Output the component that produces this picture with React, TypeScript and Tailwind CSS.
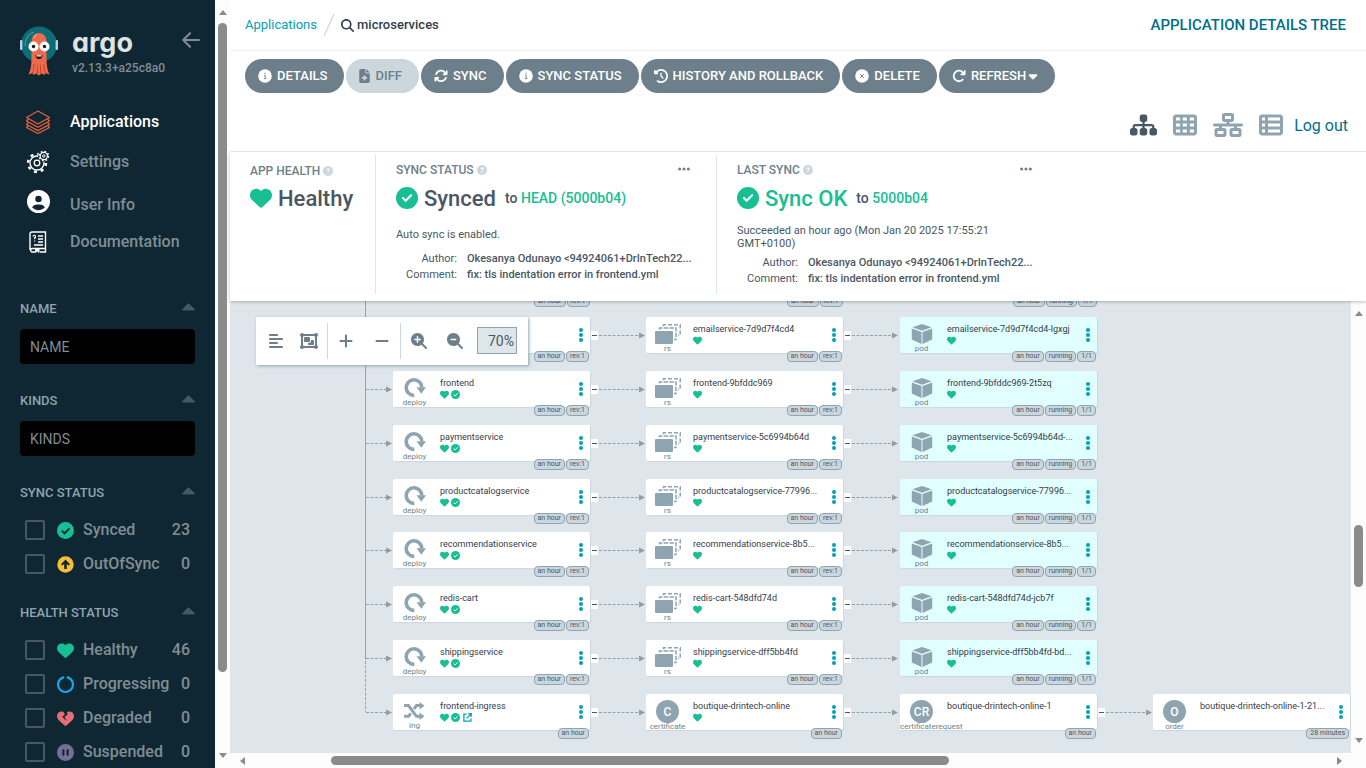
import React from 'react';
import {
  FaAlignLeft,
  FaArrowRotateRight,
  FaArrowsRotate,
  FaCaretDown,
  FaCircleCheck,
  FaCircleNotch,
  FaCirclePause,
  FaCircleQuestion,
  FaCircleUser,
  FaClockRotateLeft,
  FaEllipsis,
  FaFileMedical,
  FaHeart,
  FaHeartCrack,
  FaMagnifyingGlass,
  FaMagnifyingGlassMinus,
  FaMagnifyingGlassPlus,
  FaMinus,
  FaNetworkWired,
  FaObjectGroup,
  FaPlus,
  FaSitemap,
  FaTableCells,
  FaTableList,
} from 'react-icons/fa6';

/* ---------- drawings ---------- */

function ArgoMascot() {
  return (
    <svg viewBox="0 0 38 50" className="h-[50px] w-[38px]" aria-hidden="true">
      <circle cx="19" cy="18.5" r="18" fill="#0e6b78" />
      <path d="M5 20a14 14 0 0 1 9-14" fill="none" stroke="#4d97a1" strokeWidth="1.2" />
      <rect x="0" y="14" width="2.4" height="10" rx="1" fill="#b4d4e4" />
      <rect x="35.6" y="14" width="2.4" height="10" rx="1" fill="#b4d4e4" />
      <path d="M11.5 15a7.5 8 0 0 1 15 0v17c0 6 .5 12 3 16.500l-4-1.500-1 2-2.500-1.500-3 2-3-2-2.500 1.500-1-2-4 1.500c2.500-4.500 3-10.500 3-16.500z" fill="#ee6a4b" />
      <path d="M14 38c0 4-.5 7-2 10M17.500 39v9M20.500 39v9M24 38c0 4 .5 7 2 10" fill="none" stroke="#b9442e" strokeWidth=".9" />
      <path d="M14 12c.5-2 1.500-3 3-3.500" fill="none" stroke="#f7a28b" strokeWidth="1.200" />
      <circle cx="13.500" cy="20.500" r="5" fill="#fff" />
      <circle cx="24.500" cy="20.500" r="5" fill="#fff" />
      <circle cx="13.500" cy="20.500" r="1.700" fill="#1a1a1a" />
      <circle cx="24.500" cy="20.500" r="1.700" fill="#1a1a1a" />
      <path d="M15.500 29h7a3.500 4 0 0 1-7 0z" fill="#2a1210" />
      <path d="M16.500 29.200h5v1.300h-5z" fill="#fff" />
    </svg>
  );
}

function StackIcon() {
  return (
    <svg viewBox="0 0 24 24" className="size-6" fill="none" stroke="#e9603c" strokeWidth="1.200" strokeLinejoin="round" aria-hidden="true">
      <path d="M12 1 23.500 7.500 12 14 .5 7.500z" />
      <path d="M2.500 9 .5 11 12 17.300 23.500 11l-2-2" />
      <path d="M2.500 12.500.5 14.500 12 20.600l11.500-6.100-2-2" />
      <path d="M2.500 15.500.5 17.500 12 23.500l11.500-6-2-2" />
    </svg>
  );
}

function GearsIcon() {
  return (
    <svg viewBox="0 0 24 24" className="size-6" fill="none" stroke="#fff" aria-hidden="true">
      <circle cx="11" cy="13" r="7" strokeWidth="1.300" />
      <circle cx="11" cy="13" r="8.900" strokeWidth="2.600" strokeDasharray="3 3.990" />
      <circle cx="11" cy="13" r="2.800" strokeWidth="1.300" />
      <circle cx="17.800" cy="6" r="5" fill="#0f2733" stroke="#0f2733" strokeWidth="1.500" />
      <circle cx="17.800" cy="6" r="3.600" strokeWidth="1.200" />
      <circle cx="17.800" cy="6" r="4.700" strokeWidth="1.400" strokeDasharray="1.800 1.890" />
      <circle cx="17.800" cy="6" r="1.200" strokeWidth="1" />
    </svg>
  );
}

function BookIcon() {
  return (
    <svg viewBox="0 0 18 22" className="h-[22px] w-[18px]" fill="none" stroke="#fff" strokeWidth="1.400" aria-hidden="true">
      <path d="M1 19V3a2 2 0 0 1 2-2h13.500v16.500H3a1.800 1.800 0 0 0 0 3.500h3M11 21h5.500v-3.500" />
      <path d="M4 5.500a1.300 1.300 0 1 1 1.600 1.300v1.400M5.600 9.500v1" strokeWidth="1.200" />
      <path d="M9 5h5M9 8h5M9 11h5M5 14h9" strokeWidth="1.300" />
      <path d="M6.500 18v3.500l1.800-1.200 1.800 1.200V18" fill="#fff" strokeWidth=".8" />
    </svg>
  );
}

function BackArrow() {
  return (
    <svg viewBox="0 0 18 16" className="h-4 w-[18px]" fill="none" stroke="#818d94" strokeWidth="2" strokeLinecap="round" strokeLinejoin="round" aria-hidden="true">
      <path d="M8 1.200 1.200 8 8 14.800M1.500 8H17" />
    </svg>
  );
}

function InfoDisc() {
  return (
    <svg viewBox="0 0 14 14" className="size-3.5" aria-hidden="true">
      <circle cx="7" cy="7" r="6.800" fill="#fff" />
      <path d="M6.300 4.300h1.400M6 6.300h1.200v3M5.800 9.600h2.600" fill="none" stroke="#6d7f8b" strokeWidth=".9" />
    </svg>
  );
}

function CrossDisc() {
  return (
    <svg viewBox="0 0 14 14" className="size-3.5" aria-hidden="true">
      <circle cx="7" cy="7" r="6.800" fill="#fff" />
      <path d="m5.200 5.200 3.600 3.600M8.800 5.200 5.200 8.800" stroke="#6d7f8b" strokeWidth="1" />
    </svg>
  );
}

function UpDisc() {
  return (
    <svg viewBox="0 0 17 17" className="size-[17px]" aria-hidden="true">
      <circle cx="8.500" cy="8.500" r="8.200" fill="#f4c030" />
      <path d="M8.500 3.500 13 8.300l-1.300 1.300-1.900-1.700v5H7.200v-5L5.300 9.600 4 8.300z" fill="#0f2733" />
    </svg>
  );
}

function DeployIcon() {
  return (
    <svg viewBox="0 0 22 20" className="h-5 w-[22px]" aria-hidden="true">
      <path d="M10.300 17.400A7.800 7.800 0 1 1 17.800 9.500" fill="none" stroke="#8fa4b1" strokeWidth="3.600" />
      <path d="M12.500 9.300H22l-4.700 6.500z" fill="#8fa4b1" />
    </svg>
  );
}

function ReplicaIcon() {
  return (
    <svg viewBox="0 0 26 20" className="h-5 w-[26px]" aria-hidden="true">
      <rect x="0" y="7" width="18" height="13" rx="1" fill="#8fa4b1" />
      <path d="M4.500 5.500V4H21v11.500h-2" fill="none" stroke="#8fa4b1" strokeWidth="1.500" strokeDasharray="4.500 1.200" />
      <path d="M8.500 2.300V.8h16.700v10.700h-2" fill="none" stroke="#8fa4b1" strokeWidth="1.500" strokeDasharray="4 2" />
    </svg>
  );
}

function PodIcon() {
  return (
    <svg viewBox="0 0 22 20" className="h-5 w-[22px]" fill="#8fa4b1" aria-hidden="true">
      <path d="M11 0 20.500 3.300 11 6.800 1.500 3.300z" />
      <path d="M.8 4.500 10.500 8v12L.8 15.500z" />
      <path d="M21.200 4.500 11.500 8v12l9.700-4.500z" />
    </svg>
  );
}

function IngressIcon() {
  return (
    <svg viewBox="0 0 21 18" className="h-[18px] w-[21px]" fill="none" stroke="#8fa4b1" strokeWidth="3" aria-hidden="true">
      <path d="M0 3.500h4.500l8 10.800H16M0 14.300h4.500l2.300-3M10 6.800l2.500-3.300H16" />
      <path d="M15.500 0 20.500 3.700 15.500 7.500zM15.500 10.500l5 3.800-5 3.700z" fill="#8fa4b1" stroke="none" />
    </svg>
  );
}

function ExternalIcon() {
  return (
    <svg viewBox="0 0 10 10" className="size-[9px]" fill="none" stroke="#00a2b3" strokeWidth="1.400" aria-hidden="true">
      <path d="M4 1.200H1V9h7.800V6M5.800.8h3.400v3.400M9 1 4 6" />
    </svg>
  );
}

function CheckDisc({ className, mark }: { className: string; mark: string }) {
  return (
    <svg viewBox="0 0 16 16" className={className} aria-hidden="true">
      <circle cx="8" cy="8" r="8" fill="#18be94" />
      <path d="m4.500 8.200 2.600 2.500 4.600-4.800" fill="none" stroke={mark} strokeWidth="1.700" />
    </svg>
  );
}

/* ---------- scrollbars ---------- */

function VScroll({ before, thumb, after }: { before: number; thumb: number; after: number }) {
  return (
    <div className="flex w-[15px] shrink-0 flex-col items-center bg-[#fcfcfc] py-2.5" aria-hidden="true">
      <span className="h-0 w-0 border-x-4 border-b-[5px] border-x-transparent border-b-[#8b8b8b]" />
      <span style={{ flexGrow: before }} />
      <span className="w-[9px] rounded-full bg-[#8b8b8b]" style={{ flexGrow: thumb }} />
      <span style={{ flexGrow: after }} />
      <span className="h-0 w-0 border-x-4 border-t-[5px] border-x-transparent border-t-[#8b8b8b]" />
    </div>
  );
}

function HScroll({ before, thumb, after }: { before: number; thumb: number; after: number }) {
  return (
    <div className="flex h-[15px] shrink-0 items-center bg-[#fcfcfc] pr-6 pl-2.5" aria-hidden="true">
      <span className="h-0 w-0 border-y-4 border-r-[5px] border-y-transparent border-r-[#8b8b8b]" />
      <span style={{ flexGrow: before }} />
      <span className="h-[9px] rounded-full bg-[#8b8b8b]" style={{ flexGrow: thumb }} />
      <span style={{ flexGrow: after }} />
      <span className="h-0 w-0 border-y-4 border-l-[5px] border-y-transparent border-l-[#8b8b8b]" />
    </div>
  );
}

/* ---------- sidebar ---------- */

function FilterTitle({ children }: { children: string }) {
  return (
    <button type="button" className="flex h-4 w-full items-center justify-between text-[13px] font-medium text-[#8fa4b1]">
      {children}
      <svg viewBox="0 0 13 8" className="mb-1 h-2 w-[13px]" aria-hidden="true">
        <path d="M1 7.600h11c.8 0 1.200-.9.600-1.400L7.300.8a1.200 1.200 0 0 0-1.600 0L.4 6.200c-.6.500-.2 1.400.6 1.400z" fill="#495763" />
      </svg>
    </button>
  );
}

function FilterRow({ icon, label, count }: { icon: React.ReactNode; label: string; count: number }) {
  return (
    <label className="flex h-[34px] items-center pr-[5px] pl-[5px] text-base font-medium text-[#818d94]">
      <input type="checkbox" className="size-5 shrink-0 appearance-none rounded-xs border-2 border-[#495763]" />
      <span className="ml-3 flex w-[17px] shrink-0 justify-center text-[17px]">{icon}</span>
      <span className="ml-[9px] flex-1">{label}</span>
      <span>{count}</span>
    </label>
  );
}

function Sidebar() {
  return (
    <aside className="w-[215px] shrink-0 overflow-hidden bg-[#0f2733]">
      <div className="flex h-[102px] items-start pt-[26px] pl-5">
        <ArgoMascot />
        <div className="ml-3.5 flex-1">
          <div className="h-[34px] font-['Inter',sans-serif] text-[27px] leading-[34px] font-bold text-[#dfe3e2] [font-feature-settings:'cv11']">argo</div>
          <div className="text-xs leading-4 font-medium text-[#818d94]">v2.13.3+a25c8a0</div>
        </div>
        <button type="button" aria-label="Collapse sidebar" className="mt-1.5 mr-[15px]">
          <BackArrow />
        </button>
      </div>
      <nav className="text-base font-medium text-[#818d94]">
        <a href="#applications" className="flex h-10 items-center text-white">
          <span className="ml-[25px] flex w-[26px] justify-center"><StackIcon /></span>
          <span className="ml-[19px]">Applications</span>
        </a>
        <a href="#settings" className="flex h-10 items-center">
          <span className="ml-[25px] flex w-[26px] justify-center"><GearsIcon /></span>
          <span className="ml-[19px]">Settings</span>
        </a>
        <a href="#user" className="flex h-[45px] items-center">
          <span className="mb-1.5 ml-[25px] flex w-[26px] justify-center text-[23px] text-white"><FaCircleUser /></span>
          <span className="ml-[19px]">User Info</span>
        </a>
        <a href="#docs" className="flex h-[30px] items-center">
          <span className="ml-[25px] flex w-[26px] justify-center"><BookIcon /></span>
          <span className="ml-[19px]">Documentation</span>
        </a>
      </nav>
      <div className="mt-11 px-5">
        <FilterTitle>NAME</FilterTitle>
        <input type="text" aria-label="Name" placeholder="NAME" className="mt-3 mb-[29px] h-[35px] w-full rounded bg-black px-2.5 text-sm placeholder:text-[#818d94]" />
        <FilterTitle>KINDS</FilterTitle>
        <input type="text" aria-label="Kinds" placeholder="KINDS" className="mt-3 mb-[29px] h-[35px] w-full rounded bg-black px-2.5 text-sm placeholder:text-[#818d94]" />
        <FilterTitle>SYNC STATUS</FilterTitle>
        <div className="mt-3 mb-6">
          <FilterRow icon={<CheckDisc className="size-[17px]" mark="#0f2733" />} label="Synced" count={23} />
          <FilterRow icon={<UpDisc />} label="OutOfSync" count={0} />
        </div>
        <FilterTitle>HEALTH STATUS</FilterTitle>
        <div className="mt-3">
          <FilterRow icon={<FaHeart color="#18be94" />} label="Healthy" count={46} />
          <FilterRow icon={<FaCircleNotch color="#0dadea" />} label="Progressing" count={0} />
          <FilterRow icon={<FaHeartCrack color="#e96d76" />} label="Degraded" count={0} />
          <FilterRow icon={<FaCirclePause color="#766f94" />} label="Suspended" count={0} />
        </div>
      </div>
    </aside>
  );
}

/* ---------- header ---------- */

function ActionButton({ icon, children, disabled }: { icon: React.ReactNode; children: React.ReactNode; disabled?: boolean }) {
  const tone = disabled ? 'bg-[#ccd6dd] text-[#6d7f8b]' : 'bg-[#6d7f8b] text-white';
  return (
    <button type="button" disabled={disabled} className={`flex h-[34px] items-center rounded-full pr-[17px] pl-[13px] text-[13px] font-medium ${tone}`}>
      <span className="mr-[5px] flex text-sm">{icon}</span>
      {children}
    </button>
  );
}

function Header() {
  return (
    <header>
      <div className="flex h-[51px] items-center border-b border-[#eef0f1] pr-5 pl-[15px] text-[13px]">
        <a href="#applications" className="text-[#00a2b3]">Applications</a>
        <svg viewBox="0 0 12 22" className="mx-1.5 h-[22px] w-3" aria-hidden="true">
          <path d="M1 22 11 0" stroke="#ccd6dd" strokeWidth="1.200" />
        </svg>
        <span className="flex items-center gap-[3px] font-medium text-[#363c4a]">
          <FaMagnifyingGlass className="text-[13px]" />
          microservices
        </span>
        <h1 className="ml-auto text-[15px] font-medium text-[#006f8a]">APPLICATION DETAILS TREE</h1>
      </div>
      <div className="flex gap-0.5 pt-2 pl-[15px]">
        <ActionButton icon={<InfoDisc />}>DETAILS</ActionButton>
        <ActionButton icon={<FaFileMedical className="h-3.5 w-[11px]" />} disabled>DIFF</ActionButton>
        <ActionButton icon={<FaArrowsRotate />}>SYNC</ActionButton>
        <ActionButton icon={<InfoDisc />}>SYNC STATUS</ActionButton>
        <ActionButton icon={<FaClockRotateLeft />}>HISTORY AND ROLLBACK</ActionButton>
        <ActionButton icon={<CrossDisc />}>DELETE</ActionButton>
        <ActionButton icon={<FaArrowRotateRight />}>
          REFRESH
          <FaCaretDown className="ml-0.5 h-3.5 w-2.5" />
        </ActionButton>
      </div>
      <div className="flex h-[59px] items-center justify-end border-b border-[#eef0f1] pt-1.5 pr-[18px] text-[#8fa4b1]">
        <button type="button" aria-label="Tree view" className="mr-4 text-[#495763]"><FaSitemap className="h-6 w-[27px]" /></button>
        <button type="button" aria-label="Pods view" className="mr-4"><FaTableCells className="size-6" /></button>
        <button type="button" aria-label="Network view" className="mr-4"><FaNetworkWired className="h-6 w-[30px]" /></button>
        <button type="button" aria-label="List view" className="mr-[11px]"><FaTableList className="size-6" /></button>
        <a href="#logout" className="pt-0.5 text-base text-[#006f8a]">Log out</a>
      </div>
    </header>
  );
}

/* ---------- status panel ---------- */

function PanelTitle({ children, menu }: { children: string; menu?: boolean }) {
  return (
    <div className="flex h-4 items-center text-xs font-medium text-[#6d7f8b]">
      {children}
      <FaCircleQuestion className="ml-[3px] text-[10px] text-[#ccd6dd]" />
      {menu && (
        <button type="button" aria-label="More" className="mb-0.5 ml-auto text-sm"><FaEllipsis /></button>
      )}
    </div>
  );
}

function CommitInfo() {
  return (
    <dl className="grid grid-cols-[61px_230px] gap-x-2.5 text-[11px] leading-4 text-[#495763]">
      <dt className="text-right">Author:</dt>
      <dd className="truncate font-medium">Okesanya Odunayo &lt;94924061+DrInTech22...</dd>
      <dt className="text-right">Comment:</dt>
      <dd className="truncate font-medium">fix: tls indentation error in frontend.yml</dd>
    </dl>
  );
}

function StatusPanel() {
  return (
    <section className="relative z-20 flex h-[149px] bg-white pt-[3px] pb-[7px] shadow-[0_1px_3px_rgba(0,0,0,0.25)]">
      <div className="min-w-[146px] border-r border-[#dee6eb] pt-2 pl-5">
        <PanelTitle>APP HEALTH</PanelTitle>
        <div className="mt-[3px] flex h-8 items-center text-[22px] font-medium text-[#495763]">
          <FaHeart className="mr-1.5 text-[22px] text-[#18be94]" />
          Healthy
        </div>
      </div>
      <div className="w-[341px] border-r border-[#dee6eb] pt-[7px] pr-[25px] pl-5">
        <PanelTitle menu>SYNC STATUS</PanelTitle>
        <div className="mt-1 flex h-8 items-center text-[22px] font-medium text-[#495763]">
          <FaCircleCheck className="mr-1.5 text-[22px] text-[#18be94]" />
          Synced
          <span className="ml-[9px] text-sm">to <a href="#head" className="text-[#18be94]">HEAD (5000b04)</a></span>
        </div>
        <p className="mt-[13px] mb-2 text-[11px] leading-4 text-[#495763]">Auto sync is enabled.</p>
        <CommitInfo />
      </div>
      <div className="w-[341px] pt-[7px] pr-[25px] pl-5">
        <PanelTitle menu>LAST SYNC</PanelTitle>
        <div className="mt-1 flex h-8 items-center text-[22px] font-medium text-[#18be94]">
          <FaCircleCheck className="mr-1.5 text-[22px]" />
          Sync OK
          <span className="ml-[9px] text-sm text-[#495763]">to <a href="#rev" className="text-[#18be94]">5000b04</a></span>
        </div>
        <p className="mt-2.5 mb-[5px] text-[11px] leading-[13px] text-[#495763]">Succeeded an hour ago (Mon Jan 20 2025 17:55:21 GMT+0100)</p>
        <CommitInfo />
      </div>
    </section>
  );
}

/* ---------- resource tree ---------- */

type Kind = 'deploy' | 'rs' | 'pod' | 'ing' | 'certificate' | 'certificaterequest' | 'order';

interface TreeNode {
  kind: Kind;
  name: string;
  x: number;
  y: number;
  healthy?: boolean;
  synced?: boolean;
  link?: boolean;
  tags: string[];
  child?: boolean;
}

const COLUMNS = [163, 416, 670, 923];
const ROWS = [16, 70, 124, 178, 231, 285, 339, 393];

const services: [string, string, string][] = [
  ['emailservice', 'emailservice-7d9d7f4cd4', 'emailservice-7d9d7f4cd4-lgxgj'],
  ['frontend', 'frontend-9bfddc969', 'frontend-9bfddc969-2t5zq'],
  ['paymentservice', 'paymentservice-5c6994b64d', 'paymentservice-5c6994b64d-...'],
  ['productcatalogservice', 'productcatalogservice-77996...', 'productcatalogservice-77996...'],
  ['recommendationservice', 'recommendationservice-8b5...', 'recommendationservice-8b5...'],
  ['redis-cart', 'redis-cart-548dfd74d', 'redis-cart-548dfd74d-jcb7f'],
  ['shippingservice', 'shippingservice-dff5bb4fd', 'shippingservice-dff5bb4fd-bd...'],
];

const nodes: TreeNode[] = [
  ...services.flatMap(([deploy, rs, pod], i): TreeNode[] => [
    { kind: 'deploy', name: deploy, x: COLUMNS[0], y: ROWS[i], healthy: true, synced: true, tags: ['an hour', 'rev:1'], child: true },
    { kind: 'rs', name: rs, x: COLUMNS[1], y: ROWS[i], healthy: true, tags: ['an hour', 'rev:1'], child: true },
    { kind: 'pod', name: pod, x: COLUMNS[2], y: ROWS[i], healthy: true, tags: ['an hour', 'running', '1/1'] },
  ]),
  { kind: 'ing', name: 'frontend-ingress', x: COLUMNS[0], y: ROWS[7], healthy: true, synced: true, link: true, tags: ['an hour'], child: true },
  { kind: 'certificate', name: 'boutique-drintech-online', x: COLUMNS[1], y: ROWS[7], healthy: true, tags: ['an hour'], child: true },
  { kind: 'certificaterequest', name: 'boutique-drintech-online-1', x: COLUMNS[2], y: ROWS[7], tags: ['an hour'], child: true },
  { kind: 'order', name: 'boutique-drintech-online-1-21...', x: COLUMNS[3], y: ROWS[7], tags: ['28 minutes'] },
];

function KindIcon({ kind }: { kind: Kind }) {
  if (kind === 'deploy') return <DeployIcon />;
  if (kind === 'rs') return <ReplicaIcon />;
  if (kind === 'pod') return <PodIcon />;
  if (kind === 'ing') return <IngressIcon />;
  const initials = kind === 'certificate' ? 'C' : kind === 'order' ? 'O' : 'CR';
  return (
    <span className="flex size-[23px] shrink-0 items-center justify-center rounded-full bg-[#8fa4b1] text-xs font-medium text-white">{initials}</span>
  );
}

function Tags({ tags }: { tags: string[] }) {
  return (
    <div className="flex gap-px">
      {tags.map((tag) => (
        <span key={tag} className="flex h-[11px] items-center rounded border border-[#8fa4b1] bg-[#ccd6dd] px-[3px] text-[7px] leading-[9px] whitespace-nowrap text-[#495763]">{tag}</span>
      ))}
    </div>
  );
}

function NodeCard({ node }: { node: TreeNode }) {
  const tone = node.kind === 'pod' ? 'bg-[#e0fffe]' : 'bg-white';
  return (
    <div className="absolute" style={{ left: node.x, top: node.y }}>
      <div className={`relative flex h-9 w-[197px] rounded-xs shadow-[1px_1px_1px_#ccd6dd] ${tone}`}>
        <div className="flex w-[43px] shrink-0 flex-col [align-items:safe_center]">
          <span className="flex h-[30px] w-[43px] items-center justify-center pt-1.5"><KindIcon kind={node.kind} /></span>
          <span className="text-[8px] leading-[8px] whitespace-nowrap text-[#6d7f8b]">{node.kind}</span>
        </div>
        <div className="min-w-0 flex-1 pt-1.5 pl-1">
          <div className="text-[9px] leading-3 whitespace-nowrap text-[#363c4a]">{node.name}</div>
          <div className="mt-px flex h-[9px] items-center gap-0.5 text-[9px] text-[#18be94]">
            {node.healthy && <FaHeart />}
            {node.synced && <CheckDisc className="size-[9px]" mark="#fff" />}
            {node.link && <a href="#open" aria-label="Open" className="ml-px"><ExternalIcon /></a>}
          </div>
        </div>
        <button type="button" aria-label="Actions" className="flex w-4 flex-col items-center justify-center gap-px pr-0.5">
          <span className="size-1 rounded-full bg-[#00a2b3]" />
          <span className="size-1 rounded-full bg-[#00a2b3]" />
          <span className="size-1 rounded-full bg-[#00a2b3]" />
        </button>
        <div className="absolute right-px -bottom-[9px]"><Tags tags={node.tags} /></div>
        {node.child && (
          <button type="button" aria-label="Collapse children" className="absolute top-[14px] left-[198px] flex h-[9px] w-[7px] items-center justify-center bg-white">
            <span className="h-px w-[5px] bg-[#495763]" />
          </button>
        )}
      </div>
    </div>
  );
}

function Edges() {
  const arrow = (x: number, y: number) => `M${x - 6} ${y - 2.5}v6l6-3z`;
  return (
    <svg className="absolute top-0 left-0 h-full w-full" aria-hidden="true">
      <g fill="none" stroke="#8fa4b1" strokeWidth="1" strokeDasharray="3 1.500">
        <path d="M135.500 0V411" />
        {ROWS.map((y) => (
          <path key={y} d={`M136 ${y + 18.5}H158`} />
        ))}
        {nodes.filter((n) => n.child).map((n) => (
          <path key={n.name + n.x} d={`M${n.x + 206} ${n.y + 18.5}H${n.x + 250}`} />
        ))}
      </g>
      <path d="M135.500 0V357" stroke="#8fa4b1" />
      <g fill="#999">
        {ROWS.map((y) => (
          <path key={y} d={arrow(162, y + 18)} />
        ))}
        {nodes.filter((n) => n.child).map((n) => (
          <path key={n.name + n.x} d={arrow(n.x + 252, n.y + 18)} />
        ))}
      </g>
    </svg>
  );
}

function ZoomBar() {
  const tool = 'flex h-9 w-9 items-center justify-center';
  return (
    <div className="absolute top-4 left-[26px] z-10 flex h-12 items-center bg-white pr-[11px] pb-px pl-0.5 text-base text-[#6d7f8b] shadow-[1px_1px_3px_#8fa4b1]">
      <button type="button" aria-label="Compact" className={tool}><FaAlignLeft /></button>
      <button type="button" aria-label="Group nodes" className="flex h-9 w-[34px] items-center justify-center border-r border-[#ccd6dd] pr-[3px]">
        <FaObjectGroup className="h-4 w-[18px]" />
      </button>
      <button type="button" aria-label="Expand all" className={tool}><FaPlus /></button>
      <button type="button" aria-label="Collapse all" className="flex h-9 w-[37px] items-center justify-center border-r border-[#ccd6dd]"><FaMinus /></button>
      <button type="button" aria-label="Zoom in" className={tool}><FaMagnifyingGlassPlus /></button>
      <button type="button" aria-label="Zoom out" className={tool}><FaMagnifyingGlassMinus /></button>
      <input type="text" aria-label="Zoom level" defaultValue="70%" className="ml-1 h-[27px] w-10 border border-[#8fa4b1] bg-[#dee6eb] pr-0.5 text-right text-sm text-[#495763]" />
    </div>
  );
}

function ResourceTree() {
  return (
    <div className="relative min-w-0 flex-1 overflow-hidden bg-[#dee6eb]">
      <Edges />
      <div className="absolute top-[-5px] left-[304px]"><Tags tags={['an hour', 'rev:1']} /></div>
      <div className="absolute top-[-5px] left-[557px]"><Tags tags={['an hour', 'rev:1']} /></div>
      <div className="absolute top-[-5px] left-[783px]"><Tags tags={['an hour', 'running', '1/1']} /></div>
      {nodes.map((n) => (
        <NodeCard key={n.name + n.x} node={n} />
      ))}
      <ZoomBar />
    </div>
  );
}

export default function App() {
  return (
    <div className="flex h-screen overflow-hidden bg-white font-['Roboto',sans-serif]">
      <Sidebar />
      <VScroll before={8} thumb={649} after={81} />
      <main className="flex min-w-0 flex-1 flex-col">
        <Header />
        <StatusPanel />
        <div className="flex min-h-0 flex-1">
          <ResourceTree />
          <VScroll before={208} thumb={62} after={151} />
        </div>
        <HScroll before={86} thumb={617} after={388} />
      </main>
    </div>
  );
}
